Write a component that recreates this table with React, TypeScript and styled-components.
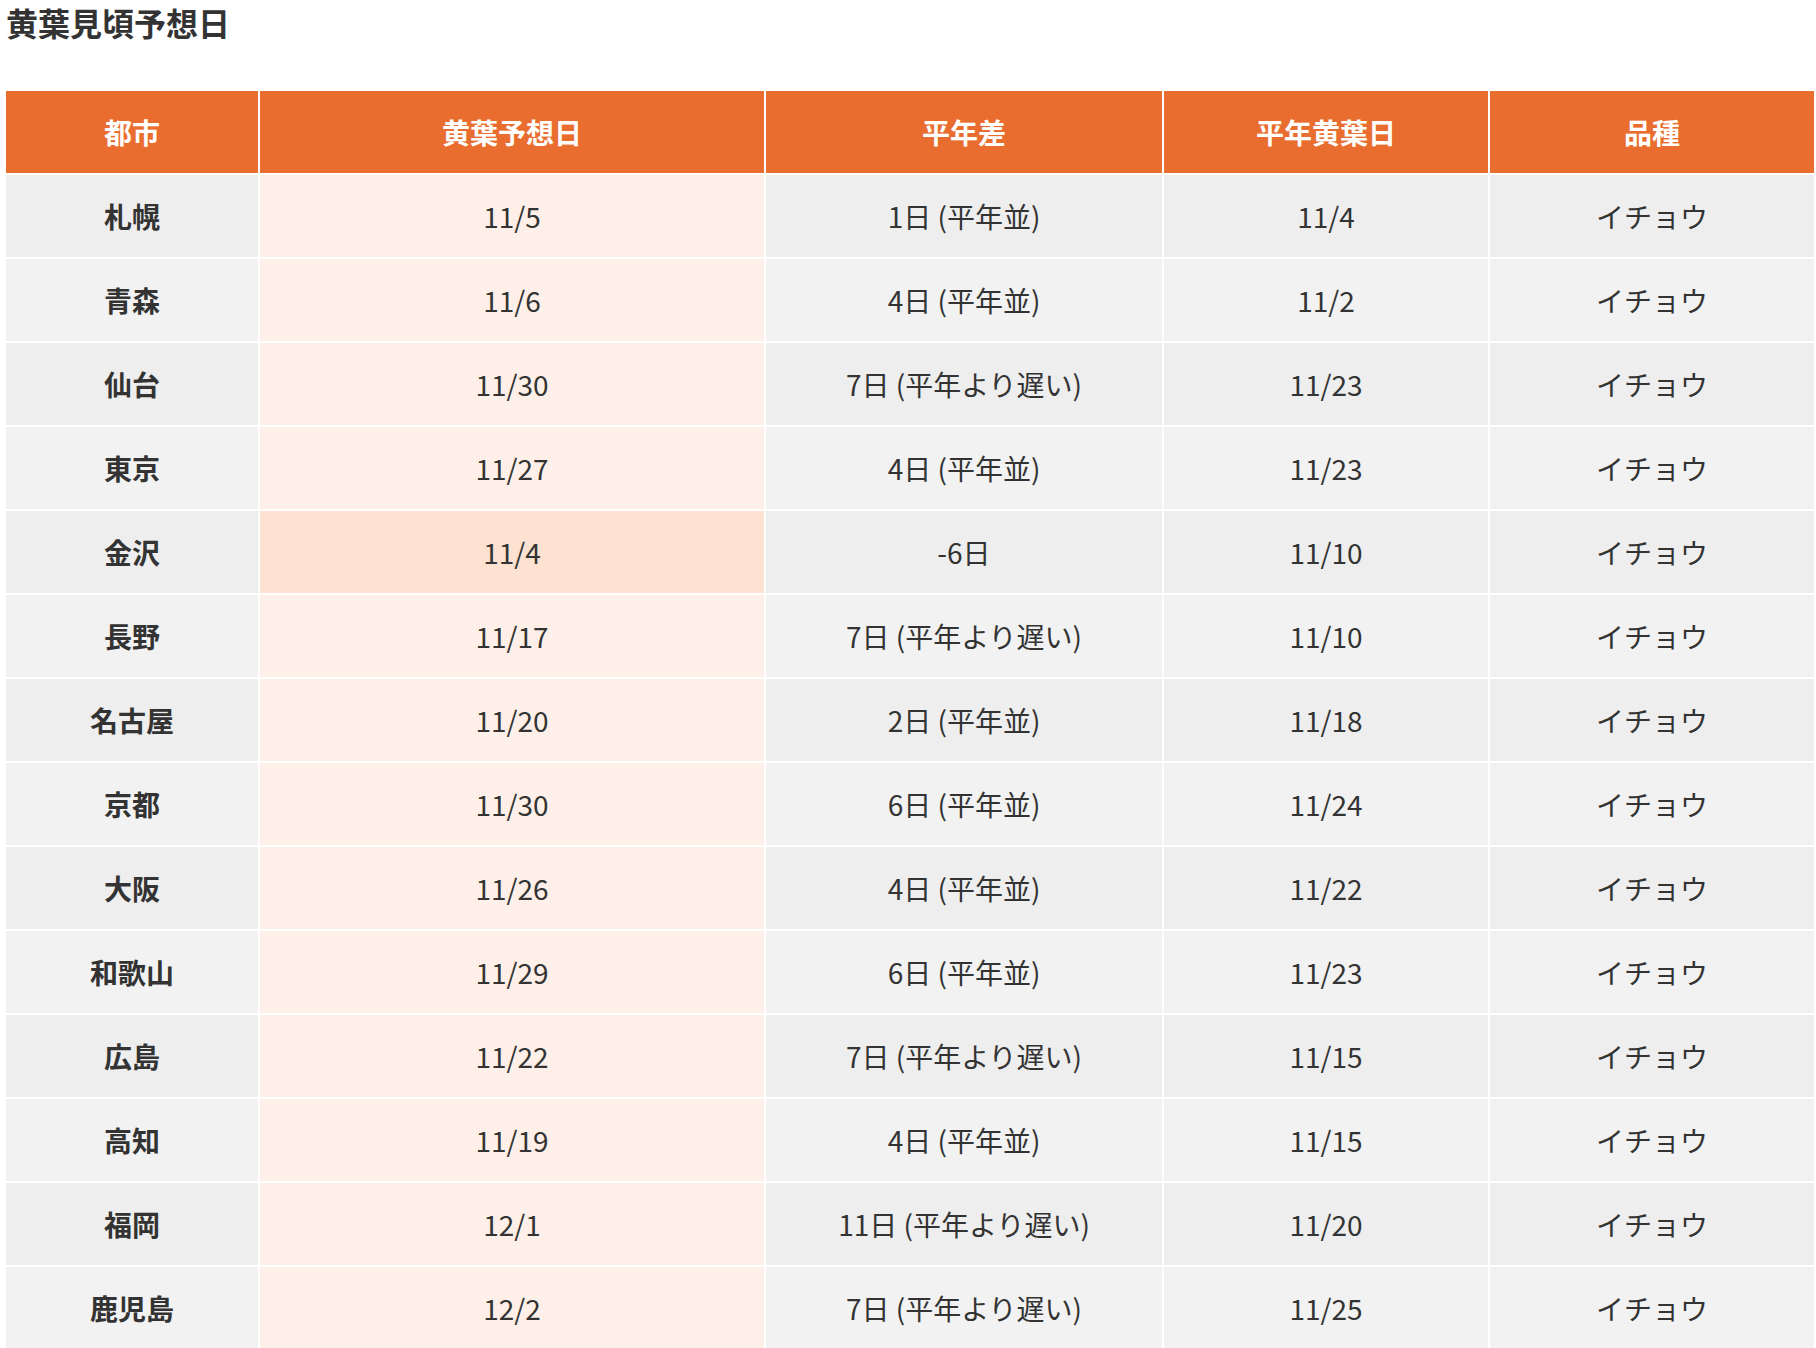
import React from "react";
import styled, { createGlobalStyle } from "styled-components";

const GlobalStyle = createGlobalStyle`
  body {
    margin: 0;
    background: #ffffff;
    font-family: "Noto Sans CJK JP", "Noto Sans", sans-serif;
    color: #333333;
  }
`;

type Row = {
  city: string;
  date: string;
  diff: string;
  normal: string;
  kind: string;
  highlight?: boolean;
};

const rows: Row[] = [
  { city: "札幌", date: "11/5", diff: "1日 (平年並)", normal: "11/4", kind: "イチョウ" },
  { city: "青森", date: "11/6", diff: "4日 (平年並)", normal: "11/2", kind: "イチョウ" },
  { city: "仙台", date: "11/30", diff: "7日 (平年より遅い)", normal: "11/23", kind: "イチョウ" },
  { city: "東京", date: "11/27", diff: "4日 (平年並)", normal: "11/23", kind: "イチョウ" },
  { city: "金沢", date: "11/4", diff: "-6日", normal: "11/10", kind: "イチョウ", highlight: true },
  { city: "長野", date: "11/17", diff: "7日 (平年より遅い)", normal: "11/10", kind: "イチョウ" },
  { city: "名古屋", date: "11/20", diff: "2日 (平年並)", normal: "11/18", kind: "イチョウ" },
  { city: "京都", date: "11/30", diff: "6日 (平年並)", normal: "11/24", kind: "イチョウ" },
  { city: "大阪", date: "11/26", diff: "4日 (平年並)", normal: "11/22", kind: "イチョウ" },
  { city: "和歌山", date: "11/29", diff: "6日 (平年並)", normal: "11/23", kind: "イチョウ" },
  { city: "広島", date: "11/22", diff: "7日 (平年より遅い)", normal: "11/15", kind: "イチョウ" },
  { city: "高知", date: "11/19", diff: "4日 (平年並)", normal: "11/15", kind: "イチョウ" },
  { city: "福岡", date: "12/1", diff: "11日 (平年より遅い)", normal: "11/20", kind: "イチョウ" },
  { city: "鹿児島", date: "12/2", diff: "7日 (平年より遅い)", normal: "11/25", kind: "イチョウ" },
];

const Page = styled.div`
  padding-left: 4px;
`;

const Title = styled.h3`
  margin: 0 0 44px 2px;
  font-size: 32px;
  line-height: 45px;
  font-weight: 700;
  color: #333333;
`;

const Table = styled.table`
  width: 100%;
  table-layout: fixed;
  border-collapse: separate;
  border-spacing: 2px;
`;

const Head = styled.th<{ $w: number }>`
  width: ${(p) => p.$w}%;
  height: 82px;
  padding: 0;
  background: #e96d2e;
  color: #ffffff;
  font-size: 28px;
  font-weight: 700;
  text-align: center;
`;

const Tr = styled.tr<{ $odd: boolean }>`
  td {
    background: ${(p) => (p.$odd ? "#eeeeee" : "#f2f2f2")};
  }
`;

const Cell = styled.td<{ $bold?: boolean; $accent?: boolean; $strong?: boolean }>`
  height: 82px;
  padding: 0;
  font-size: 28px;
  font-weight: ${(p) => (p.$bold ? 700 : 400)};
  color: #333333;
  text-align: center;
  && {
    ${(p) => (p.$accent ? `background: ${p.$strong ? "#fde2d2" : "#fef0e8"};` : "")}
  }
`;

const columns: [string, number][] = [
  ["都市", 14],
  ["黄葉予想日", 28],
  ["平年差", 22],
  ["平年黄葉日", 18],
  ["品種", 18],
];

export default function App() {
  return (
    <Page>
      <GlobalStyle />
      <Title>黄葉見頃予想日</Title>
      <Table>
        <thead>
          <tr>
            {columns.map(([label, w]) => (
              <Head key={label} $w={w}>
                {label}
              </Head>
            ))}
          </tr>
        </thead>
        <tbody>
          {rows.map((r, i) => (
            <Tr key={r.city} $odd={i % 2 === 0}>
              <Cell $bold>{r.city}</Cell>
              <Cell $accent $strong={r.highlight}>
                {r.date}
              </Cell>
              <Cell>{r.diff}</Cell>
              <Cell>{r.normal}</Cell>
              <Cell>{r.kind}</Cell>
            </Tr>
          ))}
        </tbody>
      </Table>
    </Page>
  );
}
